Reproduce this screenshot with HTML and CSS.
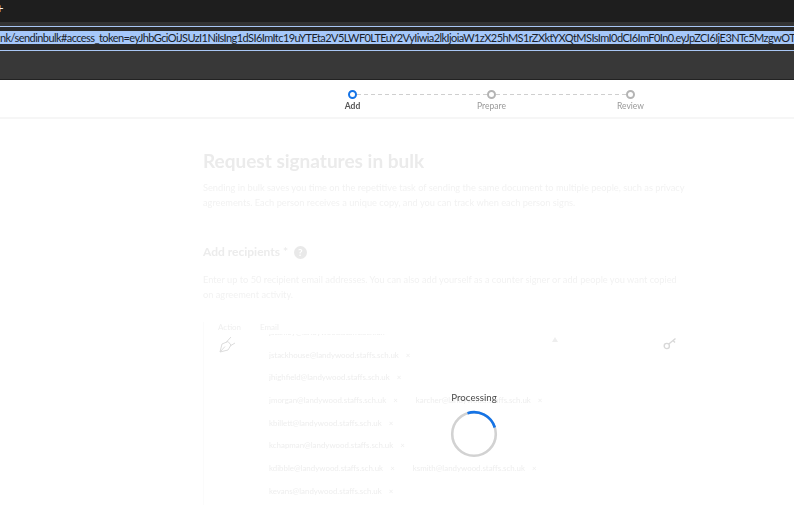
FILE: index.html
```html
<!DOCTYPE html>
<html lang="en">
<head>
    <meta charset="UTF-8">
    <meta name="viewport" content="width=device-width, initial-scale=1.0">
    <title>Request signatures in bulk</title>
    <link rel="stylesheet" href="styles.css">
</head>
<body>
    <!-- Browser chrome -->
    <div class="tab-strip"><span class="new-tab">+</span></div>
    <div class="address-bar">
        <div class="address-text">nk/sendinbulk#access_token=eyJhbGciOiJSUzI1NiIsIng1dSI6ImItc19uYTEta2V5LWF0LTEuY2VyIiwia2lkIjoiaW1zX25hMS1rZXktYXQtMSIsImI0dCI6ImF0In0.eyJpZCI6IjE3NTc5MzgwOTM4M</div>
    </div>
    <div class="toolbar"></div>

    <!-- Stepper -->
    <div class="stepper">
        <div class="step step-active">
            <span class="step-dot"></span>
            <span class="step-label">Add</span>
        </div>
        <div class="step-line"></div>
        <div class="step">
            <span class="step-dot"></span>
            <span class="step-label">Prepare</span>
        </div>
        <div class="step-line"></div>
        <div class="step">
            <span class="step-dot"></span>
            <span class="step-label">Review</span>
        </div>
    </div>

    <!-- Page behind the overlay -->
    <div class="page">
        <h1>Request signatures in bulk</h1>
        <p class="intro">Sending in bulk saves you time on the repetitive task of sending the same document to multiple people, such as privacy agreements. Each person receives a unique copy, and you can track when each person signs.</p>
        <h2>Add recipients * <span class="help">?</span></h2>
        <p class="intro intro-sub">Enter up to 50 recipient email addresses. You can also add yourself as a counter signer or add people you want copied on agreement activity.</p>

        <div class="recipients">
            <div class="action-col">
                <div class="col-title">Action</div>
                <svg class="pen" width="20" height="20" viewBox="0 0 20 20" fill="none" stroke="#dcdcdc" stroke-width="1">
                    <path d="M2 17 L4 9 L10 6.5 L13 10 L10 15 Z"/>
                    <path d="M2 17 L7 11.5"/>
                    <path d="M8 7.5 L13 2 M12 11 L17 8"/>
                </svg>
            </div>
            <div class="email-col">
                <div class="col-title">Email</div>
                <div class="email-list">
                    <div class="email-rows">
                        <div class="email-row"><span>jstanley@landywood.staffs.sch.uk</span></div>
                        <div class="email-row"><span>jstackhouse@landywood.staffs.sch.uk<i>×</i></span></div>
                        <div class="email-row"><span>jhighfield@landywood.staffs.sch.uk<i>×</i></span></div>
                        <div class="email-row"><span>jmorgan@landywood.staffs.sch.uk<i>×</i></span><span>karcher@landywood.staffs.sch.uk<i>×</i></span></div>
                        <div class="email-row"><span>kbillett@landywood.staffs.sch.uk<i>×</i></span></div>
                        <div class="email-row"><span>kchapman@landywood.staffs.sch.uk<i>×</i></span></div>
                        <div class="email-row"><span>kdibble@landywood.staffs.sch.uk<i>×</i></span><span>ksmith@landywood.staffs.sch.uk<i>×</i></span></div>
                        <div class="email-row"><span>kevans@landywood.staffs.sch.uk<i>×</i></span></div>
                    </div>
                </div>
            </div>
            <span class="caret"></span>
            <svg class="key" width="14" height="14" viewBox="0 0 14 14" fill="none" stroke="#d8d8d8" stroke-width="1.4">
                <circle cx="3.8" cy="10" r="2.6"/>
                <path d="M5.8 8 L12.5 2.5 M10 4.5 L12 6.5"/>
            </svg>
        </div>
    </div>

    <!-- Processing overlay -->
    <div class="processing">
        <div class="processing-label">Processing</div>
        <svg class="spinner" width="48" height="48" viewBox="0 0 48 48" fill="none" stroke-width="2.6">
            <circle cx="24" cy="24" r="21.8" stroke="#d2d2d2"/>
            <path d="M17.5 3.2 A21.8 21.8 0 0 1 44.8 17.5" stroke="#1473e6"/>
        </svg>
    </div>
</body>
</html>
```

FILE: styles.css
```css
html, body {
    height: 505px;
    overflow: hidden;
}

body {
    margin: 0;
    background: #fff;
    font-family: Lato, "Liberation Sans", sans-serif;
    color: #4b4b4b;
    filter: blur(0.35px);
}

/* Browser chrome */
.tab-strip {
    height: 22px;
    background: #1e1e1e;
    border-bottom: 4px solid #343434;
    overflow: hidden;
}

.new-tab {
    display: block;
    margin-left: -4px;
    color: #eee;
    font-size: 13px;
    line-height: 17px;
}

.address-bar {
    height: 23px;
    background: #2a2a2a;
    border-top: 1px solid #a9c7f5;
    border-bottom: 1px solid #a9c7f5;
    overflow: hidden;
}

.address-text {
    height: 13px;
    margin-top: 4px;
    background: #a6c8fa;
    white-space: nowrap;
    font-size: 11px;
    letter-spacing: -0.57px;
    line-height: 13px;
    color: #1a1f2b;
    overflow: hidden;
}

.toolbar {
    height: 28px;
    background: #383838;
    border-bottom: 1px solid #222;
}

/* Stepper */
.stepper {
    display: flex;
    align-items: flex-start;
    height: 37px;
    padding-left: 348px;
    border-bottom: 2px solid #f6f6f6;
}

.step {
    display: flex;
    flex-direction: column;
    align-items: center;
    width: 9px;
    margin-top: 10px;
}

.step-dot {
    box-sizing: border-box;
    flex: none;
    width: 9px;
    height: 9px;
    border: 2px solid #b4b4b4;
    border-radius: 50%;
}

.step-active .step-dot {
    border-color: #1473e6;
}

.step-label {
    margin-top: 1px;
    font-size: 8.5px;
    line-height: 12px;
    color: #999;
}

.step-active .step-label {
    color: #555;
    font-weight: 700;
}

.step-line {
    width: 130px;
    height: 1px;
    margin-top: 14px;
    background: repeating-linear-gradient(90deg, #cfcfcf 0 4px, transparent 4px 7px);
}

/* Faded page */
.page {
    width: 482px;
    margin-left: 203px;
}

h1 {
    margin: 31px 0 0;
    font-size: 19px;
    line-height: 22px;
    font-weight: 700;
    color: #ebebeb;
}

.intro {
    margin: 8px 0 0;
    font-size: 9.25px;
    line-height: 15px;
    color: #f2f2f2;
}

.intro-sub {
    margin-top: 12px;
}

h2 {
    margin: 34px 0 0;
    font-size: 12px;
    line-height: 16px;
    font-weight: 700;
    color: #ececec;
}

.help {
    display: inline-block;
    width: 13px;
    height: 13px;
    margin-left: 3px;
    border-radius: 50%;
    background: #e9e9e9;
    color: #fff;
    font-size: 10px;
    line-height: 13px;
    text-align: center;
}

.recipients {
    position: relative;
    display: flex;
    height: 190px;
    margin-top: 20px;
    border-left: 1px solid #fbfbfb;
}

.action-col {
    box-sizing: border-box;
    width: 56px;
    padding-left: 14px;
}

.col-title {
    font-size: 8px;
    line-height: 10px;
    color: #efefef;
}

.pen {
    display: block;
    margin-top: 3px;
}

.email-col {
    flex: 1;
}

.email-list {
    margin: 2px 0 0 9px;
    height: 175px;
    overflow: hidden;
}

.email-rows {
    margin-top: -13px;
}

.email-row {
    display: flex;
    gap: 18px;
    height: 22.7px;
    font-size: 7.9px;
    line-height: 22.7px;
    color: #eeeeee;
}

.email-row i {
    margin-left: 7px;
    font-style: normal;
}

.caret {
    position: absolute;
    top: 15px;
    left: 348px;
    border-left: 3px solid transparent;
    border-right: 3px solid transparent;
    border-bottom: 5px solid #eeeeee;
}

.key {
    position: absolute;
    top: 14px;
    right: 8px;
}

/* Overlay */
.processing {
    position: absolute;
    top: 391px;
    left: 450px;
    width: 48px;
    text-align: center;
}

.processing-label {
    margin: 0 -20px 6px;
    font-size: 9.7px;
    line-height: 13px;
    color: #4a4a4a;
}

.spinner {
    display: block;
}
```
